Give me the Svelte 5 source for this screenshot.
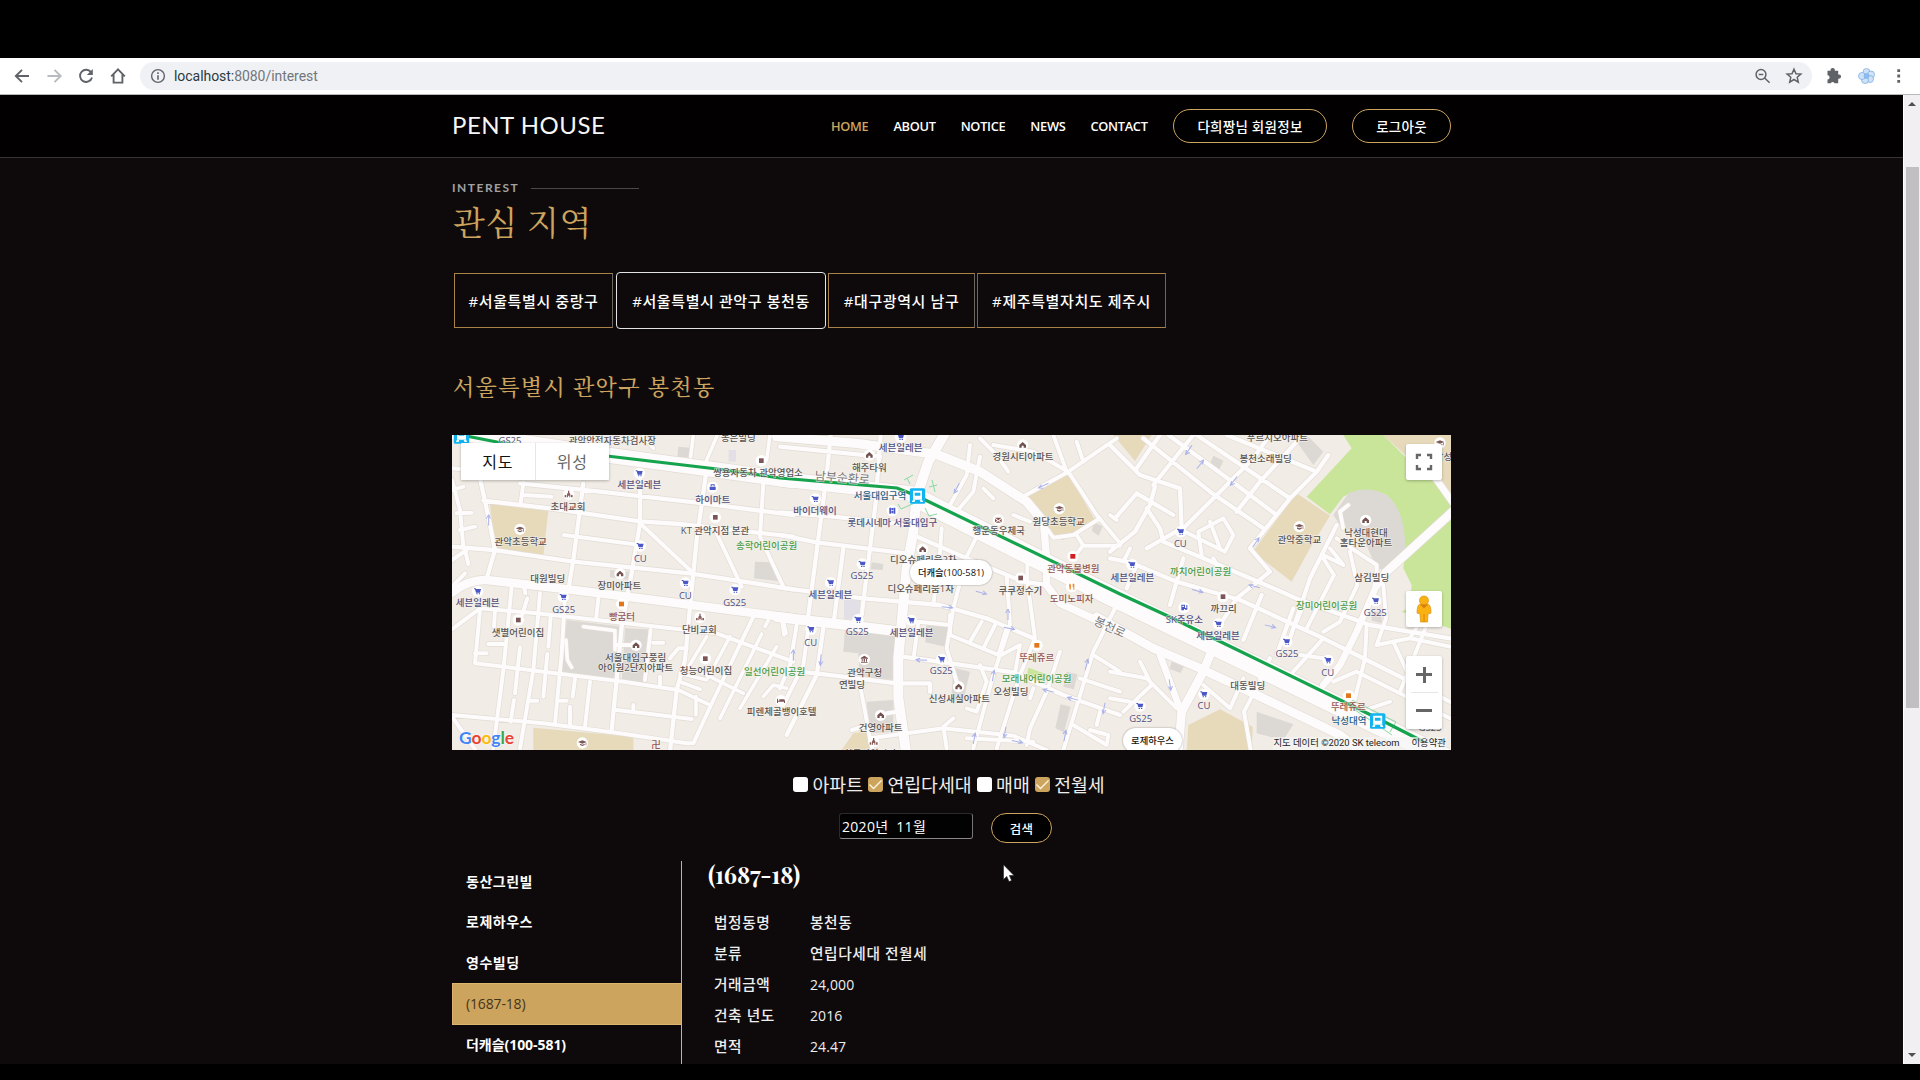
<script>
  const nav = ['HOME', 'ABOUT', 'NOTICE', 'NEWS', 'CONTACT'];
  const regions = ['#서울특별시 중랑구', '#서울특별시 관악구 봉천동', '#대구광역시 남구', '#제주특별자치도 제주시'];
  const filters = [
    { name: '아파트', on: false },
    { name: '연립다세대', on: true },
    { name: '매매', on: false },
    { name: '전월세', on: true }
  ];
  const buildings = ['동산그린빌', '로제하우스', '영수빌딩', '(1687-18)', '더캐슬(100-581)'];
  const details = [
    ['법정동명', '봉천동'],
    ['분류', '연립다세대 전월세'],
    ['거래금액', '24,000'],
    ['건축 년도', '2016'],
    ['면적', '24.47']
  ];
  const google = [['G', 'b'], ['o', 'r'], ['o', 'y'], ['g', 'b'], ['l', 'g'], ['e', 'r']];

  // The map is drawn in three tiles, each at three units per pixel.
  const tiles = [
    {
      at: 'translate(440 360) scale(.33333)',
      areas: [
        ['tan', 'M150 432L325 452L310 585L165 565Z M280 1103L580 1130V1175H280Z'],
        ['gray', 'M380 780L550 800L540 960L365 940Z M555 805L625 808L615 970L545 965Z M945 605L1000 607L1030 665L942 655Z M715 260l35 3l-3 30l-35-3Z M510 630l60 5v25l-60-8Z'],
        ['lilac', 'M866 270h22v35h-22Z']
      ],
      roads: [
        [44, 'M36 215L500 285L830 330L1060 362'],
        [24, 'M36 698Q85 658 140 660L400 690L640 720L1060 775'],
        [11, 'M130 422L330 445L600 484L720 492L1060 530 M240 370L480 395L790 430L1060 465 M36 560L160 570L400 605L750 640L1060 688 M120 355L145 470L165 570L140 655 M430 370L400 600L385 690 M600 340L600 490L575 640L545 800L530 960L515 1110 M798 340L770 540L750 740L735 900L710 990L690 1175'],
        [10, 'M36 360L60 450L70 560 M36 390L70 380 M50 460L95 458 M60 510L105 500 M36 325L90 330 M75 570L85 612 M36 600L80 570 M36 680L75 640 M250 370L242 430 M250 405L335 410 M600 490L760 640 M830 520L905 680 M970 370L960 530L1030 680 M372 525L600 555 M36 808L120 745L290 760L740 810L830 820L1060 905 M120 750L105 910L310 935L550 965L715 990L810 1035'],
        [10, 'M215 680L190 930L160 1165 M300 700L280 930L240 1165 M375 710L365 880L345 1090 M165 750L162 800 M252 680L256 700 M262 715L245 770 M332 770L325 860 M240 862L225 1000 M322 882L310 1010 M222 1020L212 1085 M405 955L398 1010 M390 1040V1095 M360 1022H380 M270 1022H292 M105 880H140 M145 852H195 M36 1065L310 1090L540 1120L740 1150L760 1150L820 1020L940 770 M36 1070L110 1175 M450 965L435 1100 M530 1050L755 1077 M580 1055V1035 M475 715L468 780 M530 855H590 M632 810L615 960 M640 848H670 M660 950V980 M690 895L715 865H740'],
        [9, 'M965 822L840 1075 M1010 860L900 1045 M870 830L800 960L720 940 M720 965L780 988 M780 935L910 1000 M768 1010V1065 M800 830L740 930 M985 780L975 800 M1025 775L1032 825 M430 800L525 812V870 M378 840L382 900L395 922 M760 225L752 290 M832 225L800 300 M990 225L980 300 M610 230L640 265 M970 1010L1000 975L1040 985']
      ]
    },
    {
      at: 'translate(780 425) scale(.33333)',
      areas: [
        ['tan', 'M735 220L865 148L945 285L850 345L800 325Z M185 975L220 925L262 918L275 975Z'],
        ['gray', 'M195 615L345 618L345 765L240 760L235 685L190 680Z M260 830L340 825V920L270 925Z M440 590L510 600V668L436 652Z M520 728L570 740L548 835L514 822Z M842 838L872 845L852 922L826 910Z M275 412l35 5l-2 18l-35-2Z M860 740l32 8l-10 45l-32-8Z M940 292l28 12l-12 28l-20-14Z'],
        ['lilac', 'M192 525h48v58h-48Z'],
        ['green', 'M745 728L800 748L782 782L738 768Z']
      ],
      roads: [
        [42, 'M0 162L400 206'],
        [28, 'M-10 576L200 600L340 617 M410 210L400 320L380 430L355 700L355 820L378 980 M495 25L445 110L415 200'],
        [56, 'M412 220L720 376L1020 526'],
        [26, 'M-10 35L230 55L470 88L600 140L740 230L790 290'],
        [20, 'M790 290L800 400L800 480L840 535L960 590'],
        [11, 'M152 30L140 150L85 570 M302 30L290 190 M0 65L300 95 M0 262L160 275L390 300 M0 330L110 352L380 385 M400 330L560 400L730 470L800 480 M0 488L250 520L480 540L620 580L760 640 M190 370L160 600 M290 210L245 570 M130 610L110 750L20 930 M0 735L110 745L350 775L450 775V800 M370 695L560 722L700 742L850 810L1020 870'],
        [10, 'M10 590L18 625 M50 600L30 720L0 790 M85 610L70 720L-5 870 M415 590L402 690 M415 590L510 600 M510 570V630L660 692L720 660L702 760 M485 310L480 380L460 540 M590 335L560 395L520 550L500 670L530 770 M742 400V470L765 640L720 750L650 970 M680 450L690 600L640 750L580 970 M605 590L570 650 M645 600L610 670 M680 610L655 690 M570 60L560 150L510 240 M600 95L580 200L530 260'],
        [10, 'M720 220L865 140L1010 40 M865 140L950 270L1020 355 M750 240L820 338L880 330L960 280 M1010 540L940 680L850 975 M840 680L800 800L750 910L740 960 M940 690L1020 740 M560 940L760 950 M240 780L270 940L490 910L700 932L800 975 M270 940L278 975 M350 860L322 865 M215 915L250 905 M640 60L760 80L865 140 M600 40L650 90L685 140 M820 30L860 140 M890 50L910 110 M890 330L910 362H1020 M910 360L880 400 M750 290L700 270 M610 190L640 220 M900 760L1020 800 M600 720L620 770L590 860L560 850 M880 900L980 960L985 930L930 915 M760 790L750 820 M960 860L950 900 M520 880L490 905L500 970']
      ]
    },
    {
      at: 'translate(1110 425) scale(.33333)',
      areas: [
        ['green', 'M700 30L725 70L590 215L660 268L700 215Q760 180 830 210Q900 280 880 430L905 480L900 545L875 560L1025 612V230L940 140L880 90L820 30Z'],
        ['gray', 'M670 270L715 205Q770 180 830 210Q890 255 886 400L845 440L800 430L760 340L690 300Z M440 860L550 898L520 945L440 925Z M560 50L590 30L640 80L610 120Z M310 92l30 15l-15 32l-28-14Z M185 710l38 12l-12 22l-32-12Z M785 560h30v35l-30-8Z'],
        ['tan', 'M560 205L660 272L600 370L545 470L428 380Z M820 30H1030V240L960 160L880 85Z M235 900L330 853L428 905L425 980H230Z M10 30H125L75 108Z']
      ],
      roads: [
        [56, 'M-20 502L30 526L320 666L1010 1000'],
        [24, 'M1030 258L830 440L800 480 M-40 575L130 670L270 730L440 810L690 930L760 985 M308 670L280 740L215 860L205 980'],
        [18, 'M800 480L740 620L690 720L640 780 M150 690L213 860 M970 150L1030 235'],
        [11, 'M0 60L90 150L210 190L215 310L110 370 M80 130L150 30 M130 180L250 30 M100 40L300 200L460 310 M175 30L380 180L500 270 M260 30L540 220 M350 30L620 140L655 90 M220 310L300 230L430 100L480 30 M380 260L450 170L560 50 M420 370L540 220L620 140 M0 380L75 320L120 240L135 185 M15 280L80 205L190 270'],
        [11, 'M110 250L150 310L160 350L270 395L480 485L570 525L780 600L1020 640 M0 400L60 412L200 470L390 525L640 640L740 690L1020 830 M220 400L180 540 M80 420L50 490 M420 370L480 440L380 520L330 600 M455 510L400 645 M550 550L500 690 M680 300L600 460L540 640 M450 760L480 700'],
        [10, 'M225 320L345 380L370 330L340 280L265 320L275 390 M300 290L330 370 M640 400L672 450L590 610 M680 340L800 420V480 M700 310L690 260L715 240 M720 380L742 480L690 590L640 620 M820 480L828 580L800 660L900 640L1020 665 M770 600L765 700L730 840 M900 640L930 590 M640 640L550 740 M640 700L570 690 M740 740L1020 880 M670 770L740 740 M850 650L900 760 M0 740L110 760L200 850 M90 710L125 780L40 860 M0 820L60 830 M460 750L402 860L422 975 M280 780L360 850L400 760 M0 270L20 285 M60 370L40 410 M640 390L700 420L660 370 M780 850L840 830 M950 600L870 800 M580 540L560 590 M310 400L320 420']
      ]
    }
  ];

  // [x, baseline, text, ink, icon, icon x, icon y]
  const labels = [
    [
      [210, 251, 'GS25', 'b'], [517, 251, '관악안전자동차검사장', 'd'], [895, 242, '동은빌딩', 'd'],
      [598, 384, '세븐일레븐', 'b', 'cart', 598, 340], [818, 428, '하이마트', 'b', 'bag', 818, 382],
      [954, 348, '쌍용자동차 관악영업소', 'd', 'sq', 964, 302], [384, 451, '초대교회', 'd', 'church', 386, 403],
      [242, 556, '관악초등학교', 'd', 'cap', 240, 508], [825, 521, 'KT 관악지점 본관', 'd', 'sq', 826, 472],
      [980, 566, '송학어린이공원', 'g'], [601, 606, 'CU', 'b', 'cart', 601, 558],
      [323, 667, '대원빌딩', 'd'], [538, 688, '장미아파트', 'd', 'home', 540, 641],
      [736, 717, 'CU', 'b', 'cart', 736, 669], [884, 737, 'GS25', 'b', 'cart', 885, 689],
      [113, 738, '세븐일레븐', 'b', 'cart', 113, 694], [371, 758, 'GS25', 'b', 'cart', 370, 711],
      [546, 780, '빵굼터', 'r', 'osq', 545, 732], [234, 828, '샛별어린이집', 'd', 'sq', 235, 780],
      [778, 819, '단비교회', 'd', 'church', 780, 772], [587, 904, '서울대입구풍림', 'd', 'home', 588, 856],
      [587, 933, '아이원2단지아파트', 'd'], [798, 942, '청능어린이집', 'd', 'sq', 796, 896],
      [1004, 944, '일선어린이공원', 'g'], [1025, 1066, '피렌체골뱅이호텔', 'd', 'bed', 1023, 1022],
      [427, 1184, '', 'd', 'cap', 427, 1149], [648, 1164, '卍', 'r']
    ],
    [
      [362, 78, '세븐일레븐', 'b', 'cart', 362, 36], [268, 137, '해주타워', 'd', 'home', 268, 90],
      [729, 104, '경원시티아파트', 'd', 'home', 728, 60], [105, 268, '바이더웨이', 'b', 'cart', 106, 222],
      [300, 221, '서울대입구역', 't'], [337, 304, '롯데시네마 서울대입구', 'b', 'film', 337, 257],
      [656, 328, '행운동우체국', 'd', 'mail', 655, 285], [836, 299, '원당초등학교', 'd', 'cap', 838, 251],
      [430, 415, '디오슈페리움2차', 'd', 'home', 428, 373], [422, 501, '디오슈페리움1차', 'd'],
      [246, 462, 'GS25', 'b', 'cart', 247, 417], [151, 520, '세븐일레븐', 'b', 'cart', 152, 473],
      [721, 506, '쿠쿠정수기', 'd', 'sq', 722, 459], [880, 440, '관악동물병원', 'r', 'rsq', 879, 394],
      [875, 531, '도미노피자', 'r', 'fork', 875, 485], [232, 629, 'GS25', 'b', 'cart', 234, 584],
      [395, 633, '세븐일레븐', 'b', 'cart', 394, 586], [92, 662, 'CU', 'b', 'cart', 93, 613],
      [770, 708, '뚜레쥬르', 'r', 'osq', 771, 661], [484, 748, 'GS25', 'b', 'cart', 485, 703],
      [254, 752, '관악구청', 'd', 'bank', 253, 703], [216, 790, '연빌딩', 'd'],
      [770, 771, '모래내어린이공원', 'g'], [693, 811, '오성빌딩', 'd'],
      [538, 831, '신성새실아파트', 'd', 'home', 536, 785], [302, 918, '건영아파트', 'd', 'home', 302, 871],
      [284, 996, '한독산악아파트', 'd', 'church', 281, 950]
    ],
    [
      [502, 48, '푸르지오아파트', 'd'], [467, 111, '봉천소래빌딩', 'd'], [568, 353, '관악중학교', 'd', 'cap', 568, 305],
      [768, 334, '낙성대현대', 'd', 'home', 767, 286], [768, 363, '홈타운아파트', 'd'],
      [211, 365, 'CU', 'b', 'cart', 212, 320], [67, 467, '세븐일레븐', 'b', 'cart', 66, 419],
      [272, 450, '까치어린이공원', 'g'], [785, 469, '삼김빌딩', 'd'], [650, 553, '장미어린이공원', 'g'],
      [341, 562, '까끄리', 'd', 'sq', 339, 515], [223, 593, 'SK주유소', 'b', 'gas', 222, 548],
      [324, 641, '세븐일레븐', 'b', 'cart', 325, 597], [796, 572, 'GS25', 'b', 'cart', 797, 527],
      [531, 696, 'GS25', 'b', 'cart', 530, 650], [653, 753, 'CU', 'b', 'cart', 654, 706],
      [413, 792, '대동빌딩', 'd'], [282, 852, 'CU', 'b', 'cart', 282, 808], [92, 890, 'GS25', 'b', 'cart', 90, 843],
      [715, 856, '뚜레쥬르', 'r', 'osq', 716, 812], [717, 897, '낙성대역', 't'],
      [960, 918, 'GS25', 'd'], [1066, 104, '낙성대초등학교', 'd', 'cap', 990, 54]
    ]
  ];

  const arrows = [
    [[146, 480, -90]],
    [[530, 190, 118], [790, 182, 155], [604, 503, 15], [502, 547, 5], [684, 568, -90], [688, 610, 12], [424, 705, 183], [40, 690, -90], [122, 705, 95], [640, 752, -80], [805, 797, 195], [878, 821, 195], [920, 718, -75], [972, 850, 100], [583, 940, -80], [675, 922, 100], [712, 950, 12], [855, 932, -80]],
    [[236, 75, 125], [271, 118, -52], [371, 168, 128], [438, 352, -55], [263, 498, 15], [433, 484, 195], [481, 604, 15], [180, 780, 82]]
  ];

  const glyphs = {
    cart: ['#4b57c4', 'M-11-9h5l1 2h15l-3 11h-12l-3-10h-3zM-4 6h4v3h-4zM3 6h4v3h-4z'],
    bag: ['#4b57c4', 'M-9-2h18v10h-18zM-6-3v-6h12v6h-3v-3h-6v3z'],
    film: ['#4b57c4', 'M-9-9h5v18h-5zM4-9h5v18h-5zM-3-8h6v7h-6zM-3 1h6v7h-6z'],
    gas: ['#4b57c4', 'M-8-9h11v10h4v-9h3v14h-7v-2l-3 0v4h-8zM-5-6v4h5v-4z'],
    sq: ['#7d5556', 'M-7-7h14v14h-14z'],
    osq: ['#e2761b', 'M-8-7h15v14h-15z'],
    rsq: ['#d21f1f', 'M-8-7h15v14h-15z'],
    fork: ['#ee8a2a', 'M-8-9h2v5h2v-5h2v8l-1 10h-3l-1-10h-1zM3-9h5v18h-3v-8h-2z'],
    home: ['#73514f', 'M0-9L10 0v8h-7v-6h-6v6h-7v-8z'],
    cap: ['#7d5a58', 'M-13-3L0-8L13-3L0 2zM-7 2L0 5L7 2v4L0 9L-7 6zM10-1h2v8h-2z'],
    church: ['#8a5f5c', 'M-2-11h4v6l3 4v10h-3v-5h-4v5h-3v-10l3-4zM-12 2h5v7h-5zM7 2h5v7h-5z'],
    mail: ['#8a5450', 'M-10-7L0 1L10-7zM-10-4v11L-3 2zM10-4v11L3 2zM-8 8L0 3L8 8z'],
    bank: ['#7d5556', 'M-11-4L0-11L11-4v2h-22zM-8-1h3v8h-3zM-2-1h4v8h-4zM5-1h3v8h-3zM-10 8h20v2h-20z'],
    bed: ['#7d5556', 'M-12-6h3v6h4v-4h13q4 0 4 5v6h-3v-4h-18v4h-3z']
  };
</script>

<div class="screen">
  <div class="toolbar">
    <svg class="nav-icons" width="130" height="36" viewBox="0 0 130 36">
      <g fill="none" stroke="#5f6368" stroke-width="1.9">
        <path d="M29 18H16.5M22 11.8L15.8 18l6.2 6.2" />
        <path stroke="#b9bbbe" d="M47.500 18H60M54.500 11.800L60.700 18l-6.200 6.200" />
        <path d="M91.300 14.600A6.100 6.100 0 1 0 92 19.500" />
        <path d="M111.200 18.400L118 11.300l6.800 7.100M113.600 16.500V24.600h8.800v-8.100" />
      </g>
      <path d="M92.800 11v6h-6z" fill="#5f6368" />
    </svg>
    <div class="address">
      <svg width="16" height="16" viewBox="0 0 16 16">
        <circle cx="8" cy="8" r="6.400" fill="none" stroke="#5f6368" stroke-width="1.400" />
        <path d="M7.200 7.200h1.600v4.500h-1.600zM7.200 4.300h1.600v1.600h-1.600z" fill="#5f6368" />
      </svg>
      <span class="host">localhost:</span><span class="path">8080/interest</span>
      <svg class="end" width="50" height="18" viewBox="0 0 50 18">
        <g fill="none" stroke="#5f6368" stroke-width="1.500">
          <circle cx="6" cy="7.500" r="4.900" /><path d="M9.600 11l5 4.800M3.700 7.500h4.600" />
          <path d="M39 2.200l2 4.500 4.900.4-3.700 3.200 1.100 4.800-4.300-2.600-4.300 2.600 1.100-4.800-3.700-3.200 4.900-.4z" />
        </g>
      </svg>
    </div>
    <svg class="menu-icons" width="90" height="20" viewBox="0 0 90 20">
      <path fill="#5f6368" d="M5.500 4.800h3.100a2.200 2.200 0 1 1 4.200 0H16.200v3.700a2.200 2.200 0 1 1 0 4.200V17.200H12.500a2 2 0 0 0-3.700 0H5.500v-3.700a2 2 0 0 0 0-4.200z" />
      <g fill="#cfe2f7" stroke="#7fb0e6" stroke-width=".8">
        <circle cx="44.500" cy="6" r="3.500" /><circle cx="49" cy="8.500" r="3.500" /><circle cx="48" cy="13" r="3.500" />
        <circle cx="43" cy="14" r="3.500" /><circle cx="40" cy="10" r="3.500" /><circle cx="44.500" cy="10" r="2.500" fill="#8fbdf0" />
      </g>
      <path fill="#5f6368" d="M75.300 3.200h2.800V6h-2.800zM75.300 8.600h2.800v2.800h-2.800zM75.300 14h2.800v2.800h-2.800z" />
    </svg>
  </div>

  <div class="view">
    <div class="page">
      <header>
        <div class="container head">
          <div class="logo">PENT HOUSE</div>
          <nav>
            {#each nav as item, i}<a class:active={i === 0}>{item}</a>{/each}
          </nav>
          <button class="pill info">다희짱님 회원정보</button>
          <button class="pill out">로그아웃</button>
        </div>
      </header>

      <main class="container">
        <div class="eyebrow"><span>INTEREST</span><i></i></div>
        <h1>관심 지역</h1>
        <div class="tags">
          {#each regions as region, i}
            <button class="tag t{i}" class:focus={i === 1}>{region}</button>
          {/each}
        </div>
        <h2>서울특별시 관악구 봉천동</h2>

        <div class="map">
          <svg class="ground" width="999" height="315" viewBox="452 435 999 315">
            {#each tiles as tile}
              <g transform={tile.at}>
                {#each tile.areas as [kind, d]}<path class={kind} {d} />{/each}
              </g>
            {/each}
            {#each tiles as tile}
              <g transform={tile.at} class="casing">
                {#each tile.roads as [w, d]}<path {d} stroke-width={w + 6} />{/each}
              </g>
            {/each}
            {#each tiles as tile}
              <g transform={tile.at} class="road">
                {#each tile.roads as [w, d]}<path {d} stroke-width={w + 2} />{/each}
              </g>
            {/each}
            <g fill="none" stroke="#8ad9a5" stroke-width="1">
              <path d="M904 480l9-5M907 478l3 6M932 480l3 12M929 487l8-2M898 504l3 5 16-7M925 508l4 8 8-2M1352 700l44 22M1352 708l40 27M1396 722l-6 10" />
            </g>
            <path class="subway" d="M466 436L497 442L607 456L717 469L780 478L897 488L917 496L1120 594L1170 617L1217 640L1377 718L1424 742" />
            {#each tiles as tile, t}
              <g transform={tile.at}>
                {#each arrows[t] as [x, y, r]}
                  <path class="arrow" d="M-17 0H14M4-7L16 0L4 5" transform="translate({x} {y}) rotate({r})" />
                {/each}
                {#each labels[t] as [x, y, text, ink, icon, ix, iy]}
                  {#if icon}
                    <g transform="translate({ix} {iy})">
                      <circle r="17" fill="#fff" />
                      <path d={glyphs[icon][1]} fill={glyphs[icon][0]} fill-rule="evenodd" />
                    </g>
                  {/if}
                  <text class="label {ink}" {x} {y}>{text}</text>
                {/each}
              </g>
            {/each}
            <text class="street" x="842" y="482" transform="rotate(4 842 482)">남부순환로</text>
            <text class="street" x="1108" y="631" transform="rotate(25 1108 631)">봉천로</text>
            {#each [[461.500, 436], [917.500, 496], [1377.700, 721]] as [x, y]}
              <g transform="translate({x} {y})">
                <rect x="-7.700" y="-7.700" width="15.400" height="15.400" rx="1.500" fill="#12b4f0" />
                <path fill="#fff" fill-rule="evenodd" d="M-4.500-5.200h9v9h-9zM-2.800-3.300v3h5.600v-3zM-4.500 3.500h2.500l-1 2.500h-2.500zM2 3.500h2.500l1 2.500h-2.500z" />
              </g>
            {/each}
          </svg>
          <div class="type"><span class="on">지도</span><span>위성</span></div>
          <div class="ctl full">
            <svg width="18" height="18" viewBox="0 0 18 18"><path d="M2 6V2h4M12 2h4v4M16 12v4h-4M6 16H2v-4" fill="none" stroke="#666" stroke-width="2.400" /></svg>
          </div>
          <div class="ctl peg">
            <svg width="18" height="28" viewBox="0 0 18 28">
              <path d="M5 9h8q3 1 3 9l-3 1-.5 8H5.500L5 19l-3-1q0-8 3-9z" fill="#fbb114" stroke="#d9930a" stroke-width=".7" />
              <circle cx="9" cy="5.500" r="4.500" fill="#fbb114" stroke="#d9930a" stroke-width=".7" />
              <path d="M5 9.500h8l-4 4zM8.600 19h.9v8h-.9z" fill="#d97f10" />
            </svg>
          </div>
          <div class="ctl zoom"><b class="plus"></b><hr /><b></b></div>
          <div class="pin castle">더캐슬(100-581)</div>
          <div class="pin roje">로제하우스</div>
          <div class="google">{#each google as [ch, c]}<span class="g{c}">{ch}</span>{/each}</div>
          <div class="terms"><span>지도 데이터 ©2020 SK telecom</span><span>이용약관</span></div>
        </div>

        <div class="filters">
          {#each filters as f}
            <span class="box" class:checked={f.on}>
              {#if f.on}<svg width="15" height="15" viewBox="0 0 15 15"><path d="M1.500 7.500L5.500 11.500L13.500 3.500" fill="none" stroke="#fff5e0" stroke-width="1.300" /></svg>{/if}
            </span><label>{f.name}</label>
          {/each}
        </div>
        <div class="search">
          <div class="month">2020년&nbsp; 11월</div>
          <button class="pill find">검색</button>
        </div>

        <div class="result">
          <ul>
            {#each buildings as b, i}<li class:selected={i === 3}>{b}</li>{/each}
          </ul>
          <section>
            <h3>(1687-18)</h3>
            <dl>
              {#each details as [k, v]}<dt>{k}</dt><dd class:num={/^\d/.test(v)}>{v}</dd>{/each}
            </dl>
          </section>
        </div>
      </main>
    </div>
    <div class="scrollbar"><i class="up"></i><div class="thumb"></div><i class="down"></i></div>
  </div>

  <svg class="cursor" width="12" height="19" viewBox="0 0 12 19"><path d="M.500.800V15.500L3.800 12.400L6 17.600L8.600 16.500L6.400 11.500H11z" fill="#fff" stroke="#222" stroke-width=".6" /></svg>
</div>

<style>
  :global(body) { background: #000; overflow: hidden; }
  .screen, .screen :global(*) { box-sizing: border-box; }
  .screen { position: relative; width: 1920px; height: 1080px; padding: 58px 0 16px; background: #000; display: flex; flex-direction: column; overflow: hidden; font-family: 'Open Sans', 'Noto Sans CJK KR', sans-serif; color: #fff; }
  button { font-family: inherit; color: inherit; padding: 0; margin: 0; white-space: nowrap; }

  .toolbar { height: 37px; flex: none; background: #fff; border-bottom: 1px solid #b8b8ba; display: flex; align-items: center; padding-left: 0; }
  .nav-icons { margin-right: 10px; }
  .address { width: 1672px; height: 28px; border-radius: 14px; background: #f0f1f5; display: flex; align-items: center; padding: 0 7px 0 10px; font: 14px/28px Roboto, sans-serif; }
  .address .host { margin-left: 8px; color: #2a3a3e; letter-spacing: -.05px; }
  .address .path { color: #72767b; letter-spacing: -.05px; }
  .address .end { margin-left: auto; }
  .menu-icons { margin-left: 10px; }

  .view { flex: 1; min-height: 0; display: flex; }
  .page { flex: 1; min-width: 0; background: #0e0a0b; overflow: hidden; }
  .container { width: 999px; margin-left: 452px; }
  header { height: 63px; background: #030002; border-bottom: 1px solid #383431; }
  .head { display: flex; align-items: center; height: 61px; }
  .logo { width: 379px; margin-top: -2px; font: 400 24px/30px Lato, sans-serif; letter-spacing: .5px; color: #f6f6f6; }
  nav { display: flex; gap: 25px; font-size: 12.800px; font-weight: 600; letter-spacing: -.3px; width: 342px; white-space: nowrap; }
  nav a.active { color: #cda45e; }
  .pill { border: 1.500px solid #cda45e; border-radius: 20px; background: #000; font-size: 13.500px; font-weight: 500; letter-spacing: .25px; }
  .info { width: 154px; height: 34px; }
  .out { width: 99px; height: 34px; margin-left: 25px; }

  .eyebrow { margin-top: 21px; height: 18px; display: flex; align-items: center; font: 700 12px/18px Lato, sans-serif; letter-spacing: 1.500px; color: #a2a1a1; }
  .eyebrow span { width: 79px; }
  .eyebrow i { width: 108px; height: 1px; background: #4b4845; }
  h1 { margin: 4px 0 0 1px; height: 40px; font: 400 33px/40px 'Noto Serif CJK KR', 'Noto Sans CJK KR', serif; letter-spacing: .6px; color: #cda45e; }
  .tags { margin-top: 31px; height: 57px; padding-left: 2px; display: flex; align-items: center; }
  .tag { height: 55px; background: #0e0a0b; border: 1.500px solid #a98345; border-right-color: #6d665f; font-size: 15px; font-weight: 500; letter-spacing: .6px; }
  .t0 { width: 159px; }
  .t1 { width: 210px; margin: 0 2px 0 3px; }
  .t2 { width: 147px; }
  .t3 { width: 189px; margin-left: 2px; border-left-color: #6d665f; }
  .tag.focus { height: 57px; border: 1.500px solid #e4e4e4; border-radius: 4px; }
  h2 { margin: 41px 0 0; height: 32px; padding-left: 1px; font: 500 22px/32px 'Noto Serif CJK KR', 'Noto Sans CJK KR', serif; letter-spacing: 1.350px; color: #cda45e; }

  .map { position: relative; margin-top: 33px; width: 999px; height: 315px; background: #f1ece5; overflow: hidden; color: #222; }
  .ground { display: block; }
  .tan { fill: #e6dabb; }
  .gray { fill: #dcd8d4; }
  .lilac { fill: #e2dfe6; }
  .green { fill: #c8e59a; }
  .casing, .road { fill: none; stroke-linecap: round; stroke-linejoin: round; }
  .casing { stroke: #e2dcd5; }
  .road { stroke: #fdfbfb; }
  .subway { fill: none; stroke: #15a34d; stroke-width: 3.200; }
  .arrow { fill: none; stroke: #a9b1ea; stroke-width: 3; }
  .label { font: 500 28.500px 'Open Sans', 'Noto Sans CJK KR', sans-serif; text-anchor: middle; paint-order: stroke; stroke: #f8f5f1; stroke-width: 4px; stroke-opacity: .7; stroke-linejoin: round; }
  .d { fill: #575454; }
  .b { fill: #4f4f80; }
  .g { fill: #4b9c45; }
  .r { fill: #955652; }
  .t { fill: #25618a; }
  .street { font: 400 12px 'Noto Sans CJK KR', sans-serif; text-anchor: middle; fill: #777; paint-order: stroke; stroke: #fff; stroke-width: 1.500px; stroke-opacity: .6; }

  .type { position: absolute; left: 9px; top: 8px; width: 148px; height: 37px; display: flex; background: #fff; border-radius: 1px; box-shadow: 0 1px 3px #0004; font: 400 16px/36px 'Noto Sans CJK KR', sans-serif; text-align: center; color: #666; }
  .type span { flex: 1; letter-spacing: .8px; }
  .type .on { color: #111; border-right: 1px solid #e6e6e6; }
  .ctl { position: absolute; left: 954px; width: 36px; background: #fff; border-radius: 2px; box-shadow: 0 1px 3px #0004; display: flex; flex-direction: column; align-items: center; justify-content: center; }
  .full { top: 9px; height: 36px; }
  .peg { top: 156px; height: 36px; }
  .zoom { top: 221px; height: 73px; justify-content: space-between; padding: 17px 0; }
  .zoom b { position: relative; width: 16px; height: 3px; background: #666; }
  .zoom .plus::after { content: ''; position: absolute; left: 6.500px; top: -6.500px; width: 3px; height: 16px; background: #666; }
  .zoom hr { width: 27px; margin: 0; border: 0; border-top: 1px solid #e6e6e6; }
  .pin { position: absolute; background: #fff; border-radius: 14px; text-align: center; font-size: 9.300px; font-weight: 500; color: #111; box-shadow: 0 0 2px #0006; }
  .castle { left: 458px; top: 125px; width: 82px; height: 25px; line-height: 25px; }
  .roje { left: 671px; top: 293px; width: 59px; height: 25px; line-height: 25px; }
  .google { position: absolute; left: 7px; top: 291px; font: 700 17.500px/24px Lato, sans-serif; letter-spacing: -.1px; text-shadow: 0 0 2px #fff; }
  .gb { color: #4285f4; } .gr { color: #ea4335; } .gy { color: #fbbc05; } .gg { color: #34a853; }
  .terms { position: absolute; right: 5px; bottom: 0; height: 13px; display: flex; gap: 12px; font: 400 9.400px/12px Roboto, 'Noto Sans CJK KR', sans-serif; background: #f5f5f5aa; color: #222; }

  .filters { margin-top: 21px; height: 28px; padding-left: 341px; display: flex; align-items: center; font-size: 18.300px; font-weight: 400; color: #eee; }
  .box { width: 15px; height: 15px; border-radius: 3px; background: #fff; display: flex; margin-top: -1px; }
  .box.checked { background: #cda45e; }
  .filters label { margin: 0 5px 0 4.500px; line-height: 28px; }
  .search { margin-top: 14px; height: 30px; padding-left: 387px; display: flex; }
  .month { width: 134px; height: 26px; border: 1px solid #2c2a2b; border-right-color: #777; border-bottom-color: #888; border-radius: 3px; background: #030203; padding-left: 2px; font-size: 14px; line-height: 26px; letter-spacing: .3px; }
  .find { width: 61px; height: 30px; margin-left: 18px; font-size: 12.500px; }

  .result { margin-top: 18px; display: flex; height: 220px; }
  ul { list-style: none; margin: 0; padding: 0; width: 230px; border-right: 1px solid #b5b5b5; }
  li { height: 41px; padding-left: 14px; font-size: 14px; font-weight: 700; line-height: 41px; white-space: nowrap; letter-spacing: .5px; }
  li:first-child { height: 40px; }
  li:last-child { letter-spacing: -.05px; line-height: 40px; }
  li.selected { height: 42px; margin-right: -1px; background: #cda45e; border: 1px solid #dcb56e; color: #44351a; font-weight: 400; padding-left: 13px; letter-spacing: -.15px; line-height: 39px; }
  section { padding-left: 26px; }
  h3 { margin: 0; height: 30px; font: 700 23.500px/28px 'Playfair Display', 'Liberation Serif', serif; letter-spacing: -.1px; }
  dl { margin: 16px 0 0 6px; display: grid; grid-template-columns: 96px 200px; grid-auto-rows: 31px; font-size: 14.700px; line-height: 31px; letter-spacing: .6px; font-weight: 500; color: #eee; }
  dt, dd { margin: 0; white-space: nowrap; }
  .num { font-size: 14px; letter-spacing: .1px; }

  .scrollbar { width: 17px; background: #f1eff2; border-left: 1px solid #fff; display: flex; flex-direction: column; align-items: center; }
  .up, .down { border: 4px solid transparent; width: 0; height: 0; }
  .up { margin-top: 3px; border-bottom-color: #505050; }
  .thumb { margin-top: 61px; width: 13px; height: 541px; background: #c1bfc2; }
  .down { margin-top: auto; margin-bottom: 3px; border-top-color: #505050; }
  .cursor { position: absolute; left: 1003px; top: 864px; }
</style>
